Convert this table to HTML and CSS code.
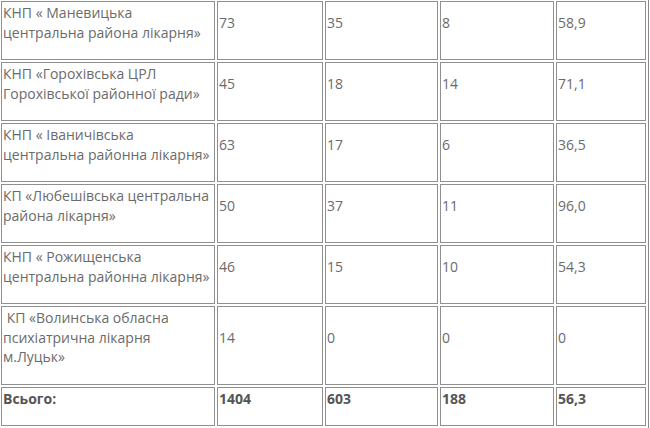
FILE: index.html
```html
<!DOCTYPE html>
<html lang="uk">
<head>
<meta charset="utf-8">
<title>Таблиця</title>
<link rel="stylesheet" href="styles.css">
</head>
<body>
<table class="stats">
  <tbody>
    <tr>
      <td class="c1"><p>КНП « Маневицька центральна района лікарня»</p></td>
      <td class="c2"><p>73</p></td>
      <td class="c3"><p>35</p></td>
      <td class="c4"><p>8</p></td>
      <td class="c5"><p>58,9</p></td>
    </tr>
    <tr>
      <td><p>КНП «Горохівська ЦРЛ Горохівської районної ради»</p></td>
      <td><p>45</p></td>
      <td><p>18</p></td>
      <td><p>14</p></td>
      <td><p>71,1</p></td>
    </tr>
    <tr>
      <td><p>КНП « Іваничівська центральна районна лікарня»</p></td>
      <td><p>63</p></td>
      <td><p>17</p></td>
      <td><p>6</p></td>
      <td><p>36,5</p></td>
    </tr>
    <tr>
      <td><p>КП «Любешівська центральна района лікарня»</p></td>
      <td><p>50</p></td>
      <td><p>37</p></td>
      <td><p>11</p></td>
      <td><p>96,0</p></td>
    </tr>
    <tr>
      <td><p>КНП « Рожищенська центральна районна лікарня»</p></td>
      <td><p>46</p></td>
      <td><p>15</p></td>
      <td><p>10</p></td>
      <td><p>54,3</p></td>
    </tr>
    <tr>
      <td><p>&nbsp;КП «Волинська обласна психіатрична лікарня м.Луцьк»</p></td>
      <td><p>14</p></td>
      <td><p>0</p></td>
      <td><p>0</p></td>
      <td><p>0</p></td>
    </tr>
    <tr class="total">
      <td><p>Всього:</p></td>
      <td><p>1404</p></td>
      <td><p>603</p></td>
      <td><p>188</p></td>
      <td><p>56,3</p></td>
    </tr>
  </tbody>
</table>
</body>
</html>
```
FILE: styles.css
```css
html, body {
  margin: 0;
  padding: 0;
  background: #ffffff;
}

body {
  font-family: "Open Sans", "DejaVu Sans", sans-serif;
  font-size: 14px;
  line-height: 19.5px;
  color: #6b6b6b;
  overflow: hidden;
}

.stats {
  margin: -2px 0 0 -2px;
  width: 651px;
  table-layout: fixed;
  border-collapse: separate;
  border-spacing: 2px;
  border: 1px solid #8a8a8a;
}

.stats td {
  box-sizing: border-box;
  border: 1px solid #8f8f8f;
  padding: 1px;
  vertical-align: middle;
}

.stats p {
  margin: 0 0 16px;
}

.stats .c1 { width: 214px; }
.stats .c2 { width: 106px; }
.stats .c3 { width: 113px; }
.stats .c4 { width: 114px; }
.stats .c5 { width: 90px; }

.total td {
  font-weight: bold;
  color: #555555;
}
```
